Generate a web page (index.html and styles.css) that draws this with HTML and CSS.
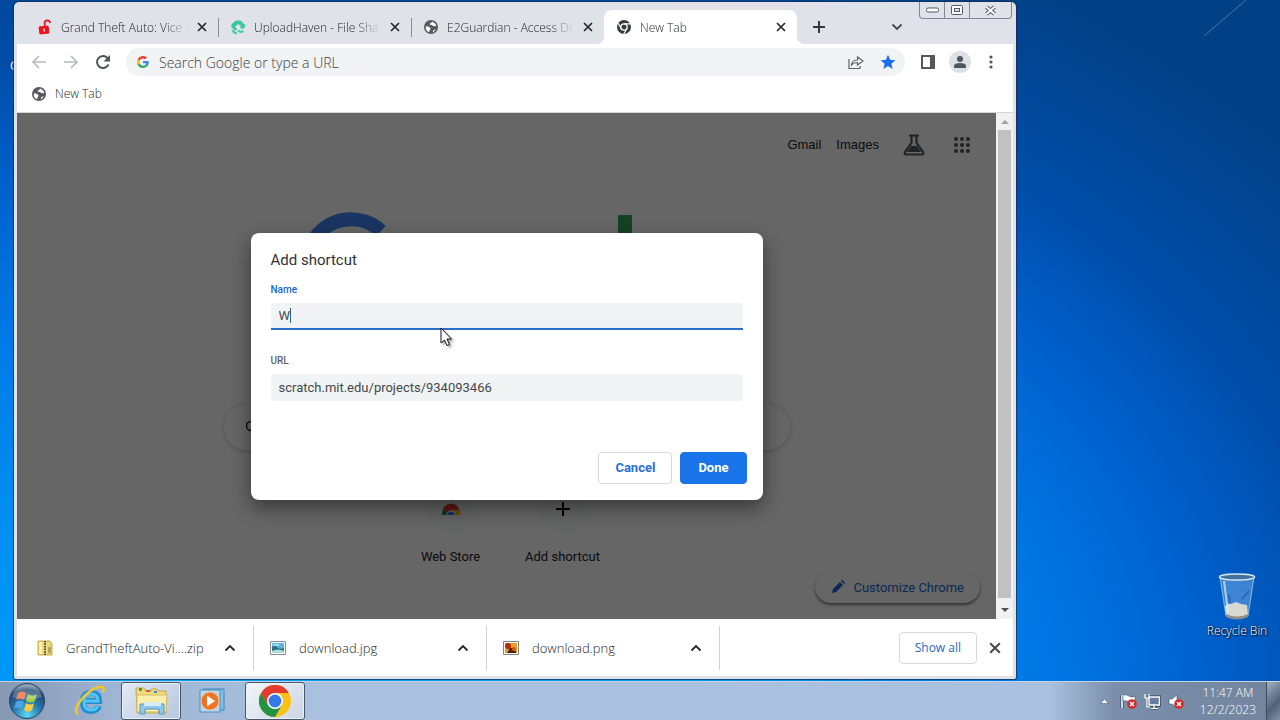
FILE: index.html
```html
<!DOCTYPE html>
<html lang="en">
<head>
<meta charset="utf-8">
<title>New Tab</title>
<link rel="stylesheet" href="styles.css">
</head>
<body>
<svg width="0" height="0" class="defs" aria-hidden="true">
  <symbol id="x" viewBox="0 0 10 10"><path d="M1 1l8 8M9 1l-8 8" fill="none" stroke="currentColor" stroke-width="1.7"/></symbol>
  <symbol id="up" viewBox="0 0 12 8"><path d="M1.500 6.500L6 2l4.500 4.500" fill="none" stroke="currentColor" stroke-width="1.800"/></symbol>
  <symbol id="globe" viewBox="0 0 16 16"><circle cx="8" cy="8" r="7" fill="#55585c"/><path d="M2.800 7.500q1.500-.8 3 .3l1.700 1.500q.2 1.500-1 2l-.3 2Q2.500 12 2.800 7.500zM9 2.600q-.3 1.600-1.700 1.600-1.300.6-.2 1.500l2 .4q.8 1.500 2.400.9l1.800.2q-.3-3-4.300-4.600zM9.500 13.500l.8-2.300 2.500-1.200q-.8 2.600-3.300 3.500z" fill="#fff"/></symbol>
  <symbol id="chrome" viewBox="0 0 32 32">
    <circle cx="16" cy="16" r="16" fill="#fbc116"/>
    <path d="M2.100 8A16 16 0 0 0 16 32l7-12-7 3.500L9 20z" fill="#229342"/>
    <path d="M2.100 8A16 16 0 0 1 29.900 8H16L9 20z" fill="#e33b2e"/>
    <circle cx="16" cy="16" r="8" fill="#fff"/><circle cx="16" cy="16" r="6.400" fill="#3579e8"/>
  </symbol>
  <symbol id="bad" viewBox="0 0 10 10"><circle cx="5" cy="5" r="4.800" fill="#d42c2c"/><path d="M3 3l4 4M7 3L3 7" stroke="#fff" stroke-width="1.400"/></symbol>
</svg>

<main class="desktop">
  <svg class="streak" width="60" height="44" viewBox="0 0 60 44" aria-hidden="true"><path d="M8 36L50 0" stroke="#7fb0dc" stroke-opacity=".5"/></svg>
  <span class="hidden-icon">G</span>
  <button class="recycle">
    <svg width="38" height="48" viewBox="0 0 38 48" aria-hidden="true">
      <path d="M2 4l6 39q11 5 22 0l6-39z" fill="#6fa6df" fill-opacity=".55" stroke="#b8d6ef" stroke-opacity=".7"/>
      <path d="M7 34q2-4 6-3l5-2 5 2 6 1 1 10q-11 5-22 0z" fill="#d9d9d2"/>
      <path d="M8 41q11 5 22 0v3q-11 5-22 0z" fill="#8c8f8a"/>
      <path d="M11 22l1 8M31 18l-7 8" fill="none" stroke="#1c57ad" stroke-width="2" opacity=".6"/>
      <ellipse cx="19" cy="4" rx="17.500" ry="3" fill="#41719f" stroke="#d7e5ef" stroke-width="1.500"/>
      <path d="M6 8l4 31" stroke="#dcecf8" stroke-opacity=".7" stroke-width="2"/>
    </svg>
    <span>Recycle Bin</span>
  </button>

  <section class="window" aria-label="Browser">
    <div class="caption">
      <button aria-label="Minimize"><svg width="13" height="6" viewBox="0 0 13 6"><rect x=".5" y="1" width="12" height="4" rx="1.500" fill="#fff" stroke="#555866"/></svg></button>
      <button aria-label="Maximize"><svg width="12" height="10" viewBox="0 0 12 10"><rect x=".5" y=".5" width="11" height="9" rx="1" fill="#fff" stroke="#555866"/><rect x="3.500" y="3.500" width="5" height="3" fill="#dfe1e8" stroke="#555866"/></svg></button>
      <button class="caption-close" aria-label="Close"><svg width="13" height="11" viewBox="0 0 13 11"><path d="M2.500 2l8 7M10.500 2l-8 7" stroke="#555866" stroke-width="4"/><path d="M2.500 2l8 7M10.500 2l-8 7" stroke="#fff" stroke-width="2"/></svg></button>
    </div>
    <div class="tabs">
      <div class="tab"><svg width="16" height="16" viewBox="0 0 16 16"><path d="M2 8l9-1 1 7-9 1z" fill="#e8141c" stroke="#e8141c"/><path d="M8 7L7.500 4q.2-2.500 2.700-2.700 2.500 0 3 2.700" fill="none" stroke="#e8141c" stroke-width="1.700"/><path d="M7 9.500l.4 3" stroke="#fff" stroke-width="1.300"/></svg><button class="title">Grand Theft Auto: Vice C</button><button class="close" aria-label="Close tab"><svg><use href="#x"/></svg></button></div>
      <div class="tab divided"><svg width="16" height="16" viewBox="0 0 16 16"><path d="M2 9Q0 6 3 4q2-3 5-2.500 4-.5 5 3 3 1 2 3.500L13 10l-3-1 1-2-3-2-3 3 2 2-1 2z" fill="#37c997"/><path d="M2.500 11q1 3 4.500 3.500M8 11.500q3 2.500 5.500.5" fill="none" stroke="#45cfa0" stroke-width="2.200"/></svg><button class="title">UploadHaven - File Shar</button><button class="close" aria-label="Close tab"><svg><use href="#x"/></svg></button></div>
      <div class="tab divided"><svg width="16" height="16"><use href="#globe"/></svg><button class="title">E2Guardian - Access Der</button><button class="close" aria-label="Close tab"><svg><use href="#x"/></svg></button></div>
      <div class="tab active"><svg width="16" height="16" viewBox="0 0 16 16"><circle cx="8" cy="8" r="7" fill="#393c40"/><circle cx="8" cy="8" r="3.200" fill="none" stroke="#fff" stroke-width="1.300"/><path d="M8 4.800h6.500M5.200 9.500L2 4M10.800 9.500l-3 5.500" stroke="#fff" stroke-width="1.200"/></svg><button class="title">New Tab</button><button class="close" aria-label="Close tab"><svg><use href="#x"/></svg></button></div>
      <button class="new-tab" aria-label="New tab"><svg width="12" height="12" viewBox="0 0 12 12"><path d="M6 0v12M0 6h12" stroke="#34373b" stroke-width="2"/></svg></button>
      <button class="search-tabs" aria-label="Search tabs"><svg width="12" height="8" viewBox="0 0 12 8"><path d="M1.500 1.500L6 6l4.500-4.500" fill="none" stroke="#45484d" stroke-width="1.800"/></svg></button>
    </div>

    <div class="toolbar">
      <button aria-label="Back"><svg width="16" height="14" viewBox="0 0 16 14"><path d="M15 7H2M8 1L2 7l6 6" fill="none" stroke="#b9bbbe" stroke-width="1.700"/></svg></button>
      <button aria-label="Forward"><svg width="16" height="14" viewBox="0 0 16 14"><path d="M1 7h13M8 1l6 6-6 6" fill="none" stroke="#b9bbbe" stroke-width="1.700"/></svg></button>
      <button aria-label="Reload"><svg width="16" height="16" viewBox="0 0 16 16"><path d="M13.500 10.500A6 6 0 1 1 12.500 4L14 6" fill="none" stroke="#505357" stroke-width="2"/><path d="M15 1v6.500H8.500z" fill="#505357"/></svg></button>
      <div class="omnibox">
        <svg width="12" height="12" viewBox="0 0 48 48"><path d="M24 9.500c3.500 0 6.700 1.200 9.200 3.600l6.900-6.900C35.900 2.400 30.500 0 24 0 14.600 0 6.500 5.400 2.600 13.200l8 6.200C12.400 13.700 17.700 9.500 24 9.500z" fill="#ea4335"/><path d="M47 24.500c0-1.600-.2-3.100-.4-4.500H24v9h12.900c-.6 3-2.200 5.500-4.700 7.200l7.700 6C44.400 38 47 31.800 47 24.500z" fill="#4285f4"/><path d="M10.500 28.600a14.500 14.500 0 0 1 0-9.200l-8-6.200a24 24 0 0 0 0 21.600z" fill="#fbbc05"/><path d="M24 48c6.500 0 11.900-2.100 15.900-5.800l-7.700-6c-2.200 1.500-4.900 2.300-8.200 2.300-6.300 0-11.600-4.200-13.500-9.900l-8 6.200C6.500 42.600 14.600 48 24 48z" fill="#34a853"/></svg>
        <input class="address" aria-label="Address" placeholder="Search Google or type a URL">
        <button aria-label="Share"><svg width="16" height="16" viewBox="0 0 16 16"><path d="M1 5v9.500h11V12M3.500 11q.5-5 6-5V3L15 7l-5.500 4V8.500q-4 0-6 2.500z" fill="none" stroke="#606368" stroke-width="1.200"/></svg></button>
        <button aria-label="Bookmark"><svg width="16" height="16" viewBox="0 0 16 16"><path d="M8 .8l2.100 4.900 5.300.5-4 3.500 1.200 5.200L8 12.100l-4.600 2.800 1.200-5.200-4-3.500 5.300-.5z" fill="#1a6fe8"/></svg></button>
      </div>
      <button aria-label="Side panel"><svg width="14" height="14" viewBox="0 0 14 14"><path d="M0 0h14v14H0zM2 2v10h7V2z" fill="#55585c" fill-rule="evenodd"/></svg></button>
      <button class="profile" aria-label="Profile"><svg width="14" height="14" viewBox="0 0 14 14"><circle cx="7" cy="4" r="3" fill="#50565f"/><path d="M1 13v-2q0-3 6-3t6 3v2z" fill="#50565f"/></svg></button>
      <button aria-label="Menu"><svg width="4" height="14" viewBox="0 0 4 14" fill="#505357"><circle cx="2" cy="2" r="1.600"/><circle cx="2" cy="7" r="1.600"/><circle cx="2" cy="12" r="1.600"/></svg></button>
    </div>
    <div class="bookmarks"><a href="#"><svg width="16" height="16"><use href="#globe"/></svg>New Tab</a></div>

    <div class="viewport">
      <div class="page">
        <nav class="links">
          <a href="#">Gmail</a><a href="#">Images</a>
          <button aria-label="Labs"><svg width="22" height="22" viewBox="0 0 22 22"><path d="M6 1.500h10M8.500 2v7L2 18q-1 2.500 1 2.500h16q2 0 1-2.500L13.500 9V2" fill="none" stroke="#55575c" stroke-width="2.200"/><path d="M8 12h6l4 6H4z" fill="#55575c"/></svg></button>
          <button aria-label="Apps"><svg width="18" height="18" viewBox="0 0 18 18" fill="#55575c"><circle cx="3" cy="3" r="2"/><circle cx="9" cy="3" r="2"/><circle cx="15" cy="3" r="2"/><circle cx="3" cy="9" r="2"/><circle cx="9" cy="9" r="2"/><circle cx="15" cy="9" r="2"/><circle cx="3" cy="15" r="2"/><circle cx="9" cy="15" r="2"/><circle cx="15" cy="15" r="2"/></svg></button>
        </nav>
        <svg class="logo" width="413" height="135" viewBox="0 0 413 135" role="img" aria-label="Google"><path d="M81 20A44 44 0 1 0 95 54H52" fill="none" stroke="#4285f4" stroke-width="14"/><path d="M318 4h14v96h-14z" fill="#34a853"/></svg>
        <div class="searchbox"><svg width="14" height="14" viewBox="0 0 14 14"><circle cx="6" cy="6" r="4.500" fill="none" stroke="#222" stroke-width="1.500"/><path d="M9 9l4 4" stroke="#222" stroke-width="1.500"/></svg></div>
        <div class="tiles">
          <a href="#" class="tile"><span class="disc"><svg width="20" height="20" viewBox="0 0 20 20"><path d="M1 16V15A9 9 0 0 1 5 7l4 9z" fill="#229342"/><path d="M10 11h9q.5 2 .5 5H11z" fill="#fbc116"/><path d="M2 9.500A9 9 0 0 1 18.500 11H10l-4 3z" fill="#e33b2e"/><path d="M5.500 16a4.500 4.500 0 0 1 9 0z" fill="#fff"/><path d="M6.500 16a3.500 3.500 0 0 1 7 0z" fill="#3579e8"/></svg></span>Web Store</a>
          <a href="#" class="tile"><span class="disc"><svg width="14" height="14" viewBox="0 0 14 14"><path d="M7 0v14M0 7h14" stroke="#000" stroke-width="2"/></svg></span>Add shortcut</a>
        </div>
        <button class="customize"><svg width="14" height="14" viewBox="0 0 14 14"><path d="M1 13l1-4 7-7 3 3-7 7zM10 1l1-1q1 0 3 3l-1 1z" fill="#1967d2"/></svg>Customize Chrome</button>
        <div class="scrim">
          <form class="dialog" role="dialog" aria-labelledby="dialog-title">
            <h1 id="dialog-title">Add shortcut</h1>
            <label for="name" class="focused">Name</label>
            <div class="field"><input id="name" class="current" value="W"><span class="caret"></span></div>
            <label for="url">URL</label>
            <div class="field"><input id="url" value="scratch.mit.edu/projects/934093466"></div>
            <div class="actions"><button type="button">Cancel</button><button type="button" class="primary">Done</button></div>
          </form>
        </div>
      </div>
      <div class="scrollbar"><svg width="17" height="17" viewBox="0 0 17 17"><path d="M5 11l4-4 4 4z" fill="#a3a3a3"/></svg><span class="thumb"></span><svg width="17" height="17" viewBox="0 0 17 17"><path d="M5 6l4 4 4-4z" fill="#505050"/></svg></div>
    </div>

    <footer class="downloads">
      <button class="download"><svg width="16" height="16" viewBox="0 0 16 16"><path d="M1 1h12l2 3v11H1z" fill="#e8d877" stroke="#c2ac4e"/><path d="M2 2h3v12H2z" fill="#f8f0ae"/><path d="M8 1v14" stroke="#58553d" stroke-width="2" stroke-dasharray="1.500 1"/><path d="M11 7h3v6h-3z" fill="#b9a557"/></svg><span>GrandTheftAuto-Vi....zip</span><svg class="chevron"><use href="#up"/></svg></button>
      <button class="download"><svg width="16" height="14" viewBox="0 0 16 14"><path d="M.5.500h15v13H.5z" fill="#fff" stroke="#8290a5"/><path d="M2 2h12v10H2z" fill="#5cb6dc"/><path d="M2 6q3-3 5 0t7 1v5H2z" fill="#2f7282"/><path d="M2 10q6-3 12 0v2H2z" fill="#b0dcda"/><path d="M3 4h6" stroke="#fff"/></svg><span>download.jpg</span><svg class="chevron"><use href="#up"/></svg></button>
      <button class="download"><svg width="16" height="14" viewBox="0 0 16 14"><path d="M.5.500h15v13H.5z" fill="#fff" stroke="#8b7f86"/><path d="M2 2h12v10H2z" fill="#e5a12c"/><circle cx="5" cy="5" r="3" fill="#b52a10"/><path d="M7 7h3v3h3v2H4z" fill="#5a1e0c"/><circle cx="11" cy="8" r="2" fill="#ce5c12"/></svg><span>download.png</span><svg class="chevron"><use href="#up"/></svg></button>
      <button class="show-all">Show all</button>
      <button class="dismiss" aria-label="Close downloads"><svg><use href="#x"/></svg></button>
    </footer>
  </section>

  <svg class="pointer" width="14" height="21" viewBox="0 0 14 21" aria-hidden="true"><path d="M1 1v15l3.500-3 2.500 5.500 2.500-1L7 12h4.500z" fill="#fff" stroke="#111"/></svg>
</main>

<footer class="taskbar">
  <button class="start" aria-label="Start"><svg width="38" height="38" viewBox="0 0 38 38">
    <defs><radialGradient id="orb" cx=".5" cy=".9" r=".9"><stop offset="0" stop-color="#5cd8f5"/><stop offset=".45" stop-color="#2876ad"/><stop offset=".8" stop-color="#23466e"/><stop offset="1" stop-color="#9db3c6"/></radialGradient></defs>
    <circle cx="19" cy="19" r="17.500" fill="url(#orb)" stroke="#23435f"/>
    <path d="M10 11q4-3 8 0l-2 7q-4-3-8 0z" fill="#ef6a32"/><path d="M20 12q4 3 9 0l-2 7q-4 3-9 0z" fill="#9ccb45"/><path d="M8 20q4-3 8 0l-2 7q-4-3-8 0z" fill="#4da3e4"/><path d="M18 21q4 3 8 0l-2 7q-4 3-8 0z" fill="#fbce3c"/>
    <path d="M4 15Q8 3 19 3t15 12Q19 20 4 15z" fill="#fff" opacity=".22"/></svg></button>
  <button class="app" aria-label="Internet Explorer"><svg width="34" height="32" viewBox="0 0 34 32"><path d="M26 21q-2 5-8 5-8 0-8-9t8-9q8 0 8 8H11" fill="none" stroke="#228dd0" stroke-width="6"/><path d="M25 21q-2 4-7 4-7 0-7-8t7-8q7 0 7 7H12" fill="none" stroke="#54c5f0" stroke-width="3"/><path d="M5 29q-5-3 3-14Q17 4 26 2q7-1 4 5" fill="none" stroke="#f2c62f" stroke-width="2.500"/></svg></button>
  <button class="app open" aria-label="Explorer"><svg width="34" height="32" viewBox="0 0 34 32"><path d="M2 3h8l2 3h5V4h6l1 2h8v22H3z" fill="#f1dc7c" stroke="#c5a749"/><path d="M5 3h3v3H5z" fill="#4b9a42"/><path d="M12 5h4v2h-4z" fill="#d9533b"/><path d="M20 6h3v2h-3z" fill="#4583c3"/><path d="M3 10h30l-1 17H3z" fill="#faefaa" stroke="#d4bd66"/><path d="M6 29V19h24v10h-5v-5H11v5z" fill="#8cc9ec" stroke="#5596c6"/><path d="M10 17h17v4H10z" fill="#d8eef8"/></svg></button>
  <button class="app" aria-label="Media Player"><svg width="28" height="28" viewBox="0 0 28 28"><path d="M5 2h21v21H5z" fill="#86bfe4" stroke="#3e84b9"/><path d="M2 3h20v22H2z" fill="#b9d8ee" stroke="#4b8fc2"/><circle cx="12" cy="14" r="9" fill="#ed7424" stroke="#f7bd91"/><path d="M9 8.500v11l8-5.500z" fill="#fff"/></svg></button>
  <button class="app open current-app" aria-label="Chrome"><svg width="32" height="32"><use href="#chrome"/></svg></button>
  <div class="tray">
    <button aria-label="Show hidden icons"><svg width="9" height="6" viewBox="0 0 9 6"><path d="M.5 5.500h8L4.500 1z" fill="#fff" stroke="#394c67" stroke-width=".5"/></svg></button>
    <button aria-label="Action Center"><svg width="17" height="17" viewBox="0 0 17 17"><path d="M2 2v13" stroke="#25364c" stroke-width="3"/><path d="M2 2v13" stroke="#fff" stroke-width="1.600"/><path d="M3 2q3-1 6 1t6 0v6q-3 2-6 0T3 8z" fill="#fff" stroke="#3b506b" stroke-width=".6"/><use href="#bad" x="7" y="6" width="10" height="10"/></svg></button>
    <button aria-label="Network"><svg width="17" height="17" viewBox="0 0 17 17"><path d="M5 4h10.500v8H5zM10 12v3M7 15.500h7" fill="#6c829f" stroke="#24364e" stroke-width="3"/><path d="M5 4h10.500v8H5zM10 12v3M7 15.500h7" fill="#667f9f" stroke="#fff" stroke-width="1.400"/><path d="M1 1v4h4V1M3 5v9h3" fill="none" stroke="#fff" stroke-width="1.200"/></svg></button>
    <button aria-label="Volume"><svg width="17" height="17" viewBox="0 0 17 17"><path d="M1 6h3l5-4v13l-5-4H1z" fill="#fff" stroke="#3b506b" stroke-width=".6"/><use href="#bad" x="6" y="6" width="10" height="10"/></svg></button>
    <button class="clock"><span>11:47 AM</span><span>12/2/2023</span></button>
  </div>
  <button class="peek" aria-label="Show desktop"></button>
</footer>
</body>
</html>
```
FILE: styles.css
```css
* { box-sizing: border-box; }
body {
  margin: 0;
  height: 100vh;
  display: flex;
  flex-direction: column;
  overflow: hidden;
  font-family: "Open Sans", "Noto Sans", sans-serif;
  font-size: 12px;
  color: #45484d;
}
button, input { font: inherit; color: inherit; border: 0; padding: 0; margin: 0; background: none; outline: 0; }
a { color: inherit; text-decoration: none; }
svg { display: block; flex: none; }
.defs { position: absolute; }

.desktop {
  position: relative;
  flex: 1;
  min-height: 0;
  background: radial-gradient(1000px 720px at 30% 105%, #00a8ff 20%, #009dfb 33%, #0078e6 66%, #005fca 84%, #004eaa 97%, #024085 120%);
}
.streak { position: absolute; top: 0; right: 24px; }
.hidden-icon { position: absolute; left: 10px; top: 57px; color: #fff; }
.recycle { position: absolute; right: 8px; bottom: 42px; width: 70px; display: flex; flex-direction: column; align-items: center; gap: 2px; color: #fff; font-size: 12px; line-height: 16px; white-space: nowrap; text-shadow: 1px 1px 2px #000, 0 0 2px #000; font-weight: 300; }
.pointer { position: absolute; left: 440px; top: 327px; filter: drop-shadow(2px 2px 1px rgba(0, 0, 0, .35)); }

.window {
  position: absolute;
  inset: 2px 264px 2px 14px;
  display: flex;
  flex-direction: column;
  padding: 3px;
  background: #dfe2e8;
  border-radius: 5px 5px 2px 2px;
  box-shadow: 0 0 1px 1px rgba(25, 40, 75, .75);
  font-weight: 300;
}
.caption { position: absolute; top: 0; right: 4px; height: 17px; display: flex; border: 1px solid #858894; border-top: 0; border-radius: 0 0 4px 4px; }
.caption button { width: 25px; display: flex; align-items: center; justify-content: center; border-right: 1px solid #858894; }
.caption .caption-close { width: 41px; border-right: 0; }

.tabs { display: flex; align-items: stretch; height: 39px; padding: 5px 0 0 8px; color: #24262a; }
.tab { position: relative; width: 193px; display: flex; align-items: center; padding: 0 11px 0 12px; gap: 8px; }
.divided::before { content: ""; position: absolute; left: 0; top: 8px; height: 19px; border-left: 1px solid #8a8d93; }
.title { flex: 1; min-width: 0; white-space: nowrap; text-align: left; mask-image: linear-gradient(90deg, #000 80%, transparent 99%); }
.close svg { width: 10px; height: 10px; }
.active { background: #fff; border-radius: 8px 8px 0 0; }
.active::before, .active::after { content: ""; position: absolute; bottom: 0; width: 8px; height: 8px; }
.active::before { left: -8px; background: radial-gradient(circle at 0 0, transparent 8px, #fff 8px); }
.active::after { right: -8px; background: radial-gradient(circle at 100% 0, transparent 8px, #fff 8px); }
.new-tab { margin-left: 16px; }
.search-tabs { margin-left: auto; margin-right: 110px; }

.toolbar { display: flex; align-items: center; gap: 16px; height: 36px; padding: 0 20px 0 14px; background: #fff; }
.omnibox { flex: 1; display: flex; align-items: center; height: 28px; margin-left: -1px; padding: 0 9px 0 11px; gap: 16px; border-radius: 14px; background: #f1f3f4; }
.address { flex: 1; min-width: 0; margin-left: -6px; font-size: 14px; }
.address::placeholder { color: #3d4045; opacity: 1; }
.profile { width: 22px; height: 22px; display: grid; place-items: center; margin: 0 2px 0 -2px; border-radius: 50%; background: #dce1e8; }
.bookmarks { display: flex; align-items: center; height: 33px; padding: 0 14px 5px; background: #fff; border-bottom: 1px solid #d5d6d8; color: #24262a; }
.bookmarks a { display: flex; align-items: center; gap: 8px; }

.viewport { flex: 1; min-height: 0; display: flex; font-family: Roboto, sans-serif; font-size: 13px; font-weight: 400; color: #202124; }
.page { position: relative; flex: 1; display: flex; flex-direction: column; align-items: center; background: #fff; overflow: hidden; }
.links { align-self: stretch; display: flex; justify-content: flex-end; align-items: center; height: 63px; padding-right: 25px; font-family: "Liberation Sans", Arial, sans-serif; }
.links a { margin-right: 15px; }
.links button { margin-left: 9px; margin-right: 19px; }
.links button:last-child { margin-right: 0; }
.logo { margin-top: 35px; }
.searchbox { width: 566px; height: 46px; margin-top: 58px; padding-left: 21px; display: flex; align-items: center; border-radius: 23px; box-shadow: 0 1px 5px rgba(32, 33, 36, .25); }
.tiles { display: flex; margin-top: 35px; }
.tile { width: 112px; display: flex; flex-direction: column; align-items: center; gap: 15px; line-height: 18px; }
.disc { width: 48px; height: 48px; display: grid; place-items: center; border-radius: 50%; background: #f8f9fa; }
.customize { position: absolute; right: 16px; bottom: 16px; height: 32px; padding: 0 16px; display: flex; align-items: center; gap: 8px; border-radius: 16px; background: #fff; color: #1967d2; box-shadow: 0 2px 3px rgba(0, 0, 0, .5); }
.scrim { position: absolute; inset: 0; display: flex; justify-content: center; align-items: center; background: rgba(0, 0, 0, .6); }
.dialog { width: 512px; padding: 16px 16px 16px 20px; border-radius: 8px; background: #fff; box-shadow: 0 8px 20px rgba(0, 0, 0, .45); color: #45484d; }
.dialog h1 { margin: 0; font-size: 15px; line-height: 22px; font-weight: 400; color: #303236; }
.dialog label { display: block; margin-top: 13px; font-size: 10px; line-height: 12px; font-weight: 500; color: #606368; }
.dialog .focused { color: #1967d2; }
.field { position: relative; margin: 7px 4px 25px 0; }
.field input { display: block; width: 100%; height: 27px; padding: 0 8px; border-radius: 4px; background: #f1f3f4; }
.field .current { border-bottom: 2px solid #2a6fc9; border-radius: 4px 4px 0 0; caret-color: transparent; }
.caret { position: absolute; left: 19px; top: 5px; width: 1px; height: 15px; background: #3060a0; }
.actions { display: flex; justify-content: flex-end; gap: 8px; margin-top: 51px; }
.actions button { height: 32px; padding: 0 16px; border: 1px solid #d5d8dc; border-radius: 4px; font-weight: 700; color: #2a6fd6; }
.actions .primary { padding: 0 17px; border-color: #1a73e8; background: #1a73e8; color: #fff; }

.scrollbar { width: 17px; display: flex; flex-direction: column; background: #f1f1f1; }
.thumb { flex: 1; margin: 0 2px 4px; background: #c1c1c1; }

.downloads { display: flex; align-items: center; height: 57px; padding-right: 12px; background: #fff; font-size: 13px; }
.download { width: 233px; height: 44px; display: flex; align-items: center; gap: 13px; padding: 0 17px 0 16px; border-right: 1px solid #cfd1d5; color: #24262a; }
.download:first-child { width: 237px; padding-left: 20px; }
.chevron { width: 12px; height: 8px; margin-left: auto; }
.show-all { height: 32px; margin-left: auto; margin-right: 12px; padding: 0 15px; border: 1px solid #d5d8dc; border-radius: 4px; color: #2867c5; font-size: 12px; font-weight: 400; }
.dismiss svg { width: 12px; height: 12px; }

.taskbar { height: 39px; display: flex; align-items: stretch; border-top: 1px solid #c6d3e2; background: linear-gradient(90deg, #8798b3 0, #93a6c3 60px, #9db4d3 110px, #a9c1df 320px, #a9c1df 82%, #7b8fab 87%, #72849d 100%); }
.start { width: 54px; display: grid; place-items: center; }
.app { width: 60px; display: grid; place-items: center; border: 1px solid transparent; border-radius: 3px; }
.start + .app { margin-left: 6px; }
.app + .app { margin-left: 1px; }
.open { border-color: #45566f; background: linear-gradient(135deg, #e1e9f3, #b7c7dd); box-shadow: inset 0 0 0 1px #eaf1f8; }
.current-app { background: linear-gradient(135deg, #f2f5f9, #cbd5e5); }
.app + .current-app { margin-left: 3px; }
.tray { margin-left: auto; display: flex; align-items: center; gap: 7px; padding-right: 10px; color: #fff; }
.tray button:first-child { margin-right: 4px; }
.clock { display: flex; flex-direction: column; align-items: center; margin-left: 8px; line-height: 17px; }
.tray .clock { font-weight: 300; }
.peek { width: 14px; border-left: 1px solid #3d4d63; background: linear-gradient(135deg, #a1afc0, #526379 60%, #7d8fa7); }
```
